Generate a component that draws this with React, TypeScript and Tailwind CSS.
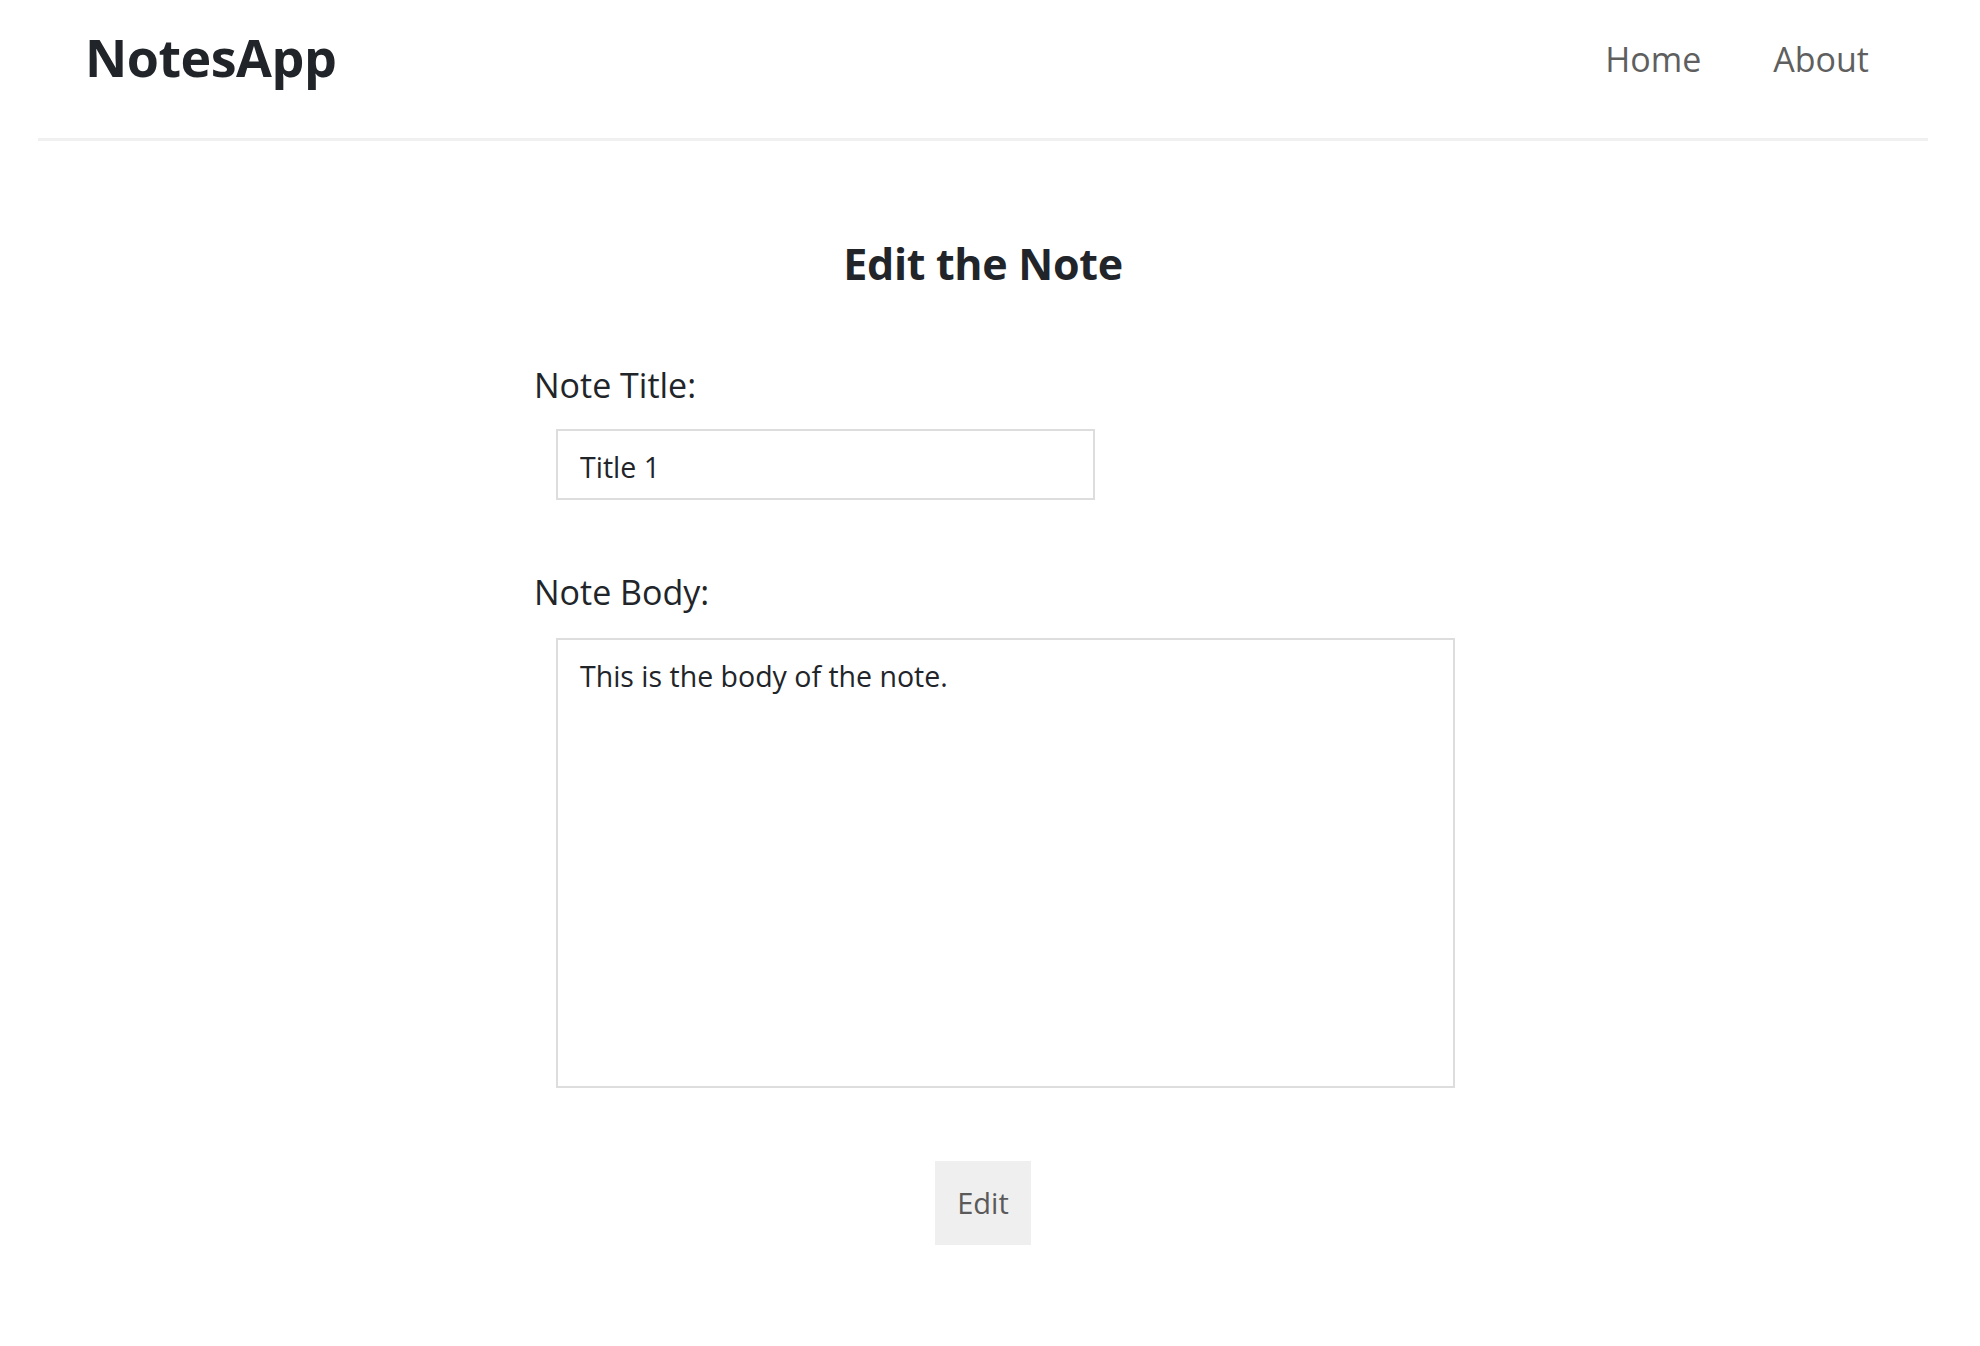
import React from "react";

export default function App() {
  const font = { fontFamily: '"Open Sans", "Noto Sans", Arial, sans-serif' };
  return (
    <div className="min-h-[1346px] w-[1980px] bg-white text-[#212529]" style={font}>
      <div className="ml-[38px] w-[1890px]">
        <header className="flex h-[141px] items-start justify-between border-b-[3px] border-[#f0f0f0] pl-[47px] pr-[59px]">
          <div className="mt-[22px] text-[52px] font-bold leading-[70px] tracking-[-0.5px] text-[#212529]">NotesApp</div>
          <nav className="mt-[34px] flex gap-[72px] text-[34px] leading-[50px] text-[#5f5f5f]">
            <a>Home</a>
            <a>About</a>
          </nav>
        </header>
        <main className="flex flex-col items-center">
          <h2 className="mt-[96px] text-[43px] font-bold leading-[54px] tracking-[-0.3px] text-[#212529]">Edit the Note</h2>
          <form className="flex w-[898px] flex-col">
            <label className="mt-[73px] text-[34px] leading-[42px] text-[#212529]">Note Title:</label>
            <input
              defaultValue="Title 1"
              className="ml-[22px] mt-[23px] h-[71px] w-[539px] border-2 border-[#dddddd] px-[22px] pt-[4px] text-[28.5px] text-[#212529] outline-none"
              style={font}
            />
            <label className="mt-[71px] text-[34px] leading-[42px] text-[#212529]">Note Body:</label>
            <textarea
              defaultValue="This is the body of the note."
              className="ml-[22px] mt-[25px] h-[450px] w-[899px] resize-none border-2 border-[#dddddd] px-[22px] pt-[16px] text-[28.5px] leading-[40px] text-[#212529] outline-none"
              style={font}
            />
          </form>
          <button className="mt-[73px] h-[84px] w-[96px] bg-[#efefef] text-[29px] text-[#5a5a5a]" style={font}>
            Edit
          </button>
        </main>
      </div>
    </div>
  );
}
